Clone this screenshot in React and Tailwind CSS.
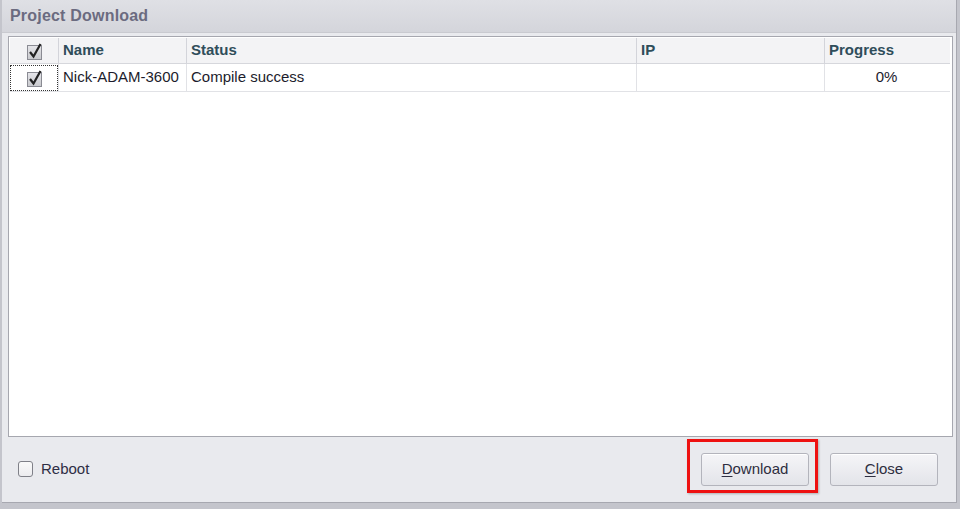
const COLUMNS = [
  { key: "check", label: "", width: 49 },
  { key: "name", label: "Name", width: 128 },
  { key: "status", label: "Status", width: 450 },
  { key: "ip", label: "IP", width: 188 },
  { key: "progress", label: "Progress", width: 125 },
];

const ROWS = [{ name: "Nick-ADAM-3600", status: "Compile success", ip: "", progress: "0%" }];

const FONT = { fontFamily: '"Liberation Sans", Arial, sans-serif' };

function CheckGlyph() {
  return (
    <svg width="20" height="20" viewBox="0 0 20 20">
      <defs>
        <linearGradient id="cbfill" x1="0" y1="0" x2="0" y2="1">
          <stop offset="0" stopColor="#e6e6ea" />
          <stop offset="1" stopColor="#c8c9cd" />
        </linearGradient>
      </defs>
      <rect x="3.5" y="4.5" width="14" height="14" fill="url(#cbfill)" stroke="#8a8b93" />
      <path d="M6 11 L9.5 15.5 L16.5 3" fill="none" stroke="#222" strokeWidth="2.2" />
    </svg>
  );
}

function Button({ children, rest }) {
  return (
    <button className="w-[108px] h-[33px] rounded-[3px] border border-[#b3b4bc] bg-gradient-to-b from-[#f5f5f8] to-[#e3e4e9] text-[15px] text-[#2e2e40] shadow-[inset_0_1px_0_#ffffff]">
      <span className="underline underline-offset-2">{children}</span>
      {rest}
    </button>
  );
}

export default function App() {
  return (
    <div className="w-[960px] h-[509px] bg-[#c4c5cc] pl-[2px] pr-[3px] pb-[6px]" style={FONT}>
      <div className="h-full flex flex-col border-r border-b border-[#a7a8b0]">
        <div className="h-[33px] shrink-0 flex items-center pl-[8px] bg-gradient-to-b from-[#dfe0e5] to-[#d4d5db] border-b border-[#c9cad0]">
          <span className="text-[16px] font-bold text-[#6b6b80] tracking-[0.2px]">Project Download</span>
        </div>

        <div className="flex-1 flex flex-col bg-[#e9eaee] pl-[6px] pr-[3px] pt-[3px]">
          <div className="h-[401px] border border-[#a6a7af] bg-white p-[1px]">
            <div className="grid grid-cols-[49px_128px_450px_188px_125px]">
              {COLUMNS.map((col, i) => (
                <div
                  key={col.key}
                  className={`h-[26px] bg-[#f3f3f5] border-b border-[#d6d7dc] flex items-center text-[15px] font-bold text-[#2f4d5a] ${i < COLUMNS.length - 1 ? "border-r border-r-[#d3d4da]" : ""} ${i === 0 ? "justify-center" : "pl-[4px]"}`}
                >
                  {i === 0 ? <CheckGlyph /> : col.label}
                </div>
              ))}

              {ROWS.map((row) => (
                <div key={row.name} className="contents">
                  <div className="h-[28px] border-b border-r border-[#e1e2e6] flex items-center justify-center">
                    <div className="w-[48px] h-[26px] border border-dotted border-[#333] flex items-center justify-center">
                      <CheckGlyph />
                    </div>
                  </div>
                  <div className="h-[28px] border-b border-r border-[#e1e2e6] flex items-center pl-[4px] text-[15px] text-[#1c1c2c]">
                    {row.name}
                  </div>
                  <div className="h-[28px] border-b border-r border-[#e1e2e6] flex items-center pl-[4px] text-[15px] text-[#1c1c2c]">
                    {row.status}
                  </div>
                  <div className="h-[28px] border-b border-r border-[#e1e2e6] flex items-center pl-[4px] text-[15px] text-[#1c1c2c]">
                    {row.ip}
                  </div>
                  <div className="h-[28px] border-b border-[#e1e2e6] flex items-center justify-center pr-[2px] text-[15px] text-[#1c1c2c]">
                    {row.progress}
                  </div>
                </div>
              ))}
            </div>
          </div>

          <div className="flex-1 flex items-center justify-between pl-[10px] pr-[15px] pb-[1px]">
            <label className="flex items-center gap-[8px] text-[15px] text-[#2e2e44]">
              <span className="w-[15px] h-[16px] rounded-[3px] border border-[#7f8088] bg-gradient-to-b from-[#fafafa] to-[#ececef]" />
              Reboot
            </label>

            <div className="flex items-center gap-[21px]">
              <div className="relative">
                <Button rest="ownload">D</Button>
                <div className="absolute left-[-14px] right-[-9px] top-[-14px] bottom-[-7px] border-[3px] border-[#ee1111] shadow-[1px_1px_2px_rgba(0,0,0,0.25)] pointer-events-none" />
              </div>
              <Button rest="lose">C</Button>
            </div>
          </div>
        </div>
      </div>
    </div>
  );
}
